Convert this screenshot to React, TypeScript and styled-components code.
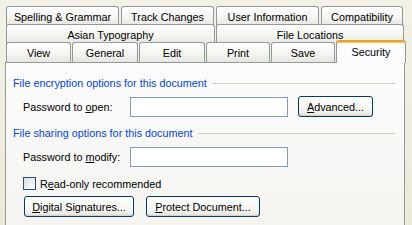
import React from 'react';
import styled, { createGlobalStyle } from 'styled-components';

const GlobalStyle = createGlobalStyle`
  html, body {
    margin: 0;
    padding: 0;
    background: #efece0;
    overflow: hidden;
  }
  body {
    font-family: 'Liberation Sans', Arial, sans-serif;
    font-size: 10.8px;
    color: #000;
  }
`;

const Dialog = styled.div`
  width: 412px;
  height: 225px;
  padding: 6px 0 0 5px;
  box-sizing: border-box;
  overflow: hidden;
  background: linear-gradient(to bottom, #f3f1e7, #ece9d8);
`;

const TabRow = styled.div<{ $h?: number; $gap?: number }>`
  display: flex;
  gap: ${p => p.$gap ?? 2}px;
  height: ${p => p.$h ?? 18}px;
  padding-left: 1px;
  position: relative;
`;

const Tab = styled.div<{ $w: number; $selected?: boolean }>`
  width: ${p => p.$w}px;
  flex: none;
  box-sizing: border-box;
  height: ${p => (p.$selected ? 23 : 20)}px;
  margin-top: ${p => (p.$selected ? -2 : 0)}px;
  border: 1px solid #919b9c;
  border-bottom: none;
  border-radius: 3px 3px 0 0;
  background: ${p =>
    p.$selected ? '#fcfcfe' : 'linear-gradient(to bottom, #ffffff, #f3f3ef 60%, #e6e5df)'};
  ${p =>
    p.$selected
      ? 'border-top: 2px solid #e9a23b; box-shadow: inset 0 1px 0 #ffc83c; z-index: 2; padding-bottom: 1px;'
      : ''}
  display: flex;
  align-items: center;
  justify-content: center;
  white-space: nowrap;
  position: relative;
`;

const Panel = styled.div`
  width: 400px;
  height: 175px;
  box-sizing: border-box;
  border: 1px solid #919b9c;
  background: linear-gradient(to bottom, #fcfcfe, #f4f3ee);
  padding: 13px 9px 0 7px;
  position: relative;
  z-index: 1;
`;

const GroupTitle = styled.div`
  display: flex;
  align-items: center;
  gap: 6px;
  color: #0046d5;
  height: 14px;
  white-space: nowrap;
  &::after {
    content: '';
    flex: 1;
    height: 1px;
    background: #d0d0bf;
  }
`;

const FieldRow = styled.div`
  display: flex;
  align-items: center;
  padding-left: 10px;
  margin-top: 6px;
  height: 21px;
`;

const Label = styled.label`
  width: 107px;
  flex: none;
  white-space: nowrap;
`;

const TextInput = styled.div`
  width: 158px;
  height: 20px;
  flex: none;
  box-sizing: border-box;
  border: 1px solid #7f9db9;
  background: #fff;
`;

const Button = styled.button<{ $w: number; $ml?: number }>`
  width: ${p => p.$w}px;
  height: 21px;
  margin-left: ${p => p.$ml ?? 0}px;
  box-sizing: border-box;
  border: 1px solid #003c74;
  border-radius: 3px;
  background: linear-gradient(to bottom, #ffffff, #f4f4f0 70%, #e3e2da);
  box-shadow: inset 0 -1px 0 #d6d0c5;
  font-family: inherit;
  font-size: 10.8px;
  color: #000;
  padding: 0;
  flex: none;
`;

const CheckRow = styled.div`
  display: flex;
  align-items: center;
  gap: 4px;
  padding-left: 10px;
  margin-top: 10px;
  height: 13px;
  white-space: nowrap;
`;

const CheckBox = styled.span`
  width: 13px;
  height: 13px;
  flex: none;
  box-sizing: border-box;
  border: 1px solid #1c5180;
  background: linear-gradient(135deg, #dcdcd7, #fff);
`;

const ButtonRow = styled.div`
  display: flex;
  gap: 12px;
  padding-left: 11px;
  margin-top: 6px;
`;

const GroupGap = styled.div`
  height: 9px;
`;

const App: React.FC = () => {
  return (
    <>
      <GlobalStyle />
      <Dialog>
        <TabRow>
          <Tab $w={113}>Spelling &amp; Grammar</Tab>
          <Tab $w={93}>Track Changes</Tab>
          <Tab $w={103}>User Information</Tab>
          <Tab $w={82}>Compatibility</Tab>
        </TabRow>
        <TabRow $gap={1}>
          <Tab $w={209}>Asian Typography</Tab>
          <Tab $w={188}>File Locations</Tab>
        </TabRow>
        <TabRow $h={20} $gap={1}>
          <Tab $w={65}>View</Tab>
          <Tab $w={66}>General</Tab>
          <Tab $w={66}>Edit</Tab>
          <Tab $w={64}>Print</Tab>
          <Tab $w={64}>Save</Tab>
          <Tab $w={70} $selected>Security</Tab>
        </TabRow>
        <Panel>
          <GroupTitle>File encryption options for this document</GroupTitle>
          <FieldRow>
            <Label>Password to <u>o</u>pen:</Label>
            <TextInput />
            <Button $w={75} $ml={10}>
              <u>A</u>dvanced...
            </Button>
          </FieldRow>
          <GroupGap />
          <GroupTitle>File sharing options for this document</GroupTitle>
          <FieldRow>
            <Label>Password to <u>m</u>odify:</Label>
            <TextInput />
          </FieldRow>
          <CheckRow>
            <CheckBox />
            <span>R<u>e</u>ad-only recommended</span>
          </CheckRow>
          <ButtonRow>
            <Button $w={110}>
              <u>D</u>igital Signatures...
            </Button>
            <Button $w={114}>
              <u>P</u>rotect Document...
            </Button>
          </ButtonRow>
        </Panel>
      </Dialog>
    </>
  );
};

export default App;
